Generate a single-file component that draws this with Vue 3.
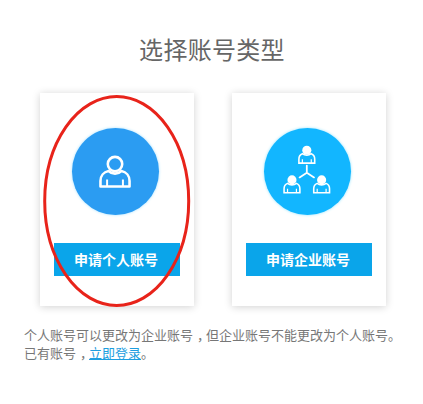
<script setup>
const cards = [
  { label: '申请个人账号', color: '#2b9cf2', glow: '#a5e0ff', kind: 'one' },
  { label: '申请企业账号', color: '#12b6ff', glow: '#8fe2ff', kind: 'many' }
]
const people = [
  { dx: 0, dy: 0 },
  { dx: -15, dy: 30 },
  { dx: 15, dy: 30 }
]
</script>

<template>
  <main class="page">
    <h1 class="title">选择账号类型</h1>
    <section class="cards">
      <article v-for="card in cards" :key="card.label" class="card">
        <div class="circle" :style="{ backgroundColor: card.color, boxShadow: '0 0 3px ' + card.glow }">
          <svg v-if="card.kind === 'one'" class="icon" viewBox="0 0 88 88" fill="none" stroke="#fff" stroke-width="2.6">
            <circle cx="43.500" cy="36.500" r="7.300" />
            <path d="M37 43.500C32 44.500 28.800 48.500 28.800 53.500V59.200H58.200V53.500C58.200 48.500 55 44.500 50 43.500C46.500 47 40.500 47 37 43.500Z" stroke-linejoin="round" />
            <path d="M35.500 52V59M51.500 52V59" stroke-width="2" />
          </svg>
          <svg v-else class="icon" viewBox="0 0 88 88" fill="none" stroke="#fff">
            <g v-for="p in people" :key="p.dx" :transform="'translate(' + (p.dx - 0.7) + ' ' + p.dy + ')'">
              <circle cx="44" cy="22.500" r="4.600" fill="#fff" stroke="none" />
              <path d="M39.500 26C37 27 36 29 36 31.500V35.500H52V31.500C52 29 51 27 48.500 26C46 28 42 28 39.500 26Z" stroke-width="1.600" />
              <path d="M39.500 31.500V35.500M48.500 31.500V35.500" stroke-width="1.200" />
            </g>
            <path d="M43.300 38V45.300L36 50M43.300 45.300L50.600 50" stroke-width="1.800" stroke-linecap="round" stroke-linejoin="round" />
          </svg>
        </div>
        <button class="apply" type="button">{{ card.label }}</button>
      </article>
      <svg class="ring" viewBox="0 0 150 215" fill="none">
        <ellipse cx="73.700" cy="107" rx="72" ry="104.500" stroke="#e8231a" stroke-width="3" />
      </svg>
    </section>
    <p class="note">
      个人账号可以更改为企业账号<span class="comma">，</span>但企业账号不能更改为个人账号。<br />已有账号<span class="comma">，</span><a class="link">立即登录</a>。
    </p>
  </main>
</template>

<style scoped>
.page {
  width: 423px;
  height: 404px;
  box-sizing: border-box;
  padding-top: 34px;
  background: #fff;
  font-family: "Noto Sans CJK SC", "Liberation Sans", sans-serif;
  overflow: hidden;
}
.title {
  margin: 0 0 24px;
  padding-left: 1px;
  height: 35px;
  line-height: 30px;
  text-align: center;
  font-size: 24px;
  letter-spacing: 0.3px;
  font-weight: 400;
  color: #666;
}
.cards {
  position: relative;
  display: flex;
  gap: 38px;
  padding-left: 40px;
}
.card {
  width: 154px;
  height: 213px;
  box-sizing: border-box;
  padding-top: 35px;
  display: flex;
  flex-direction: column;
  align-items: center;
  background: #fff;
  box-shadow: 0 1px 8px rgba(0, 0, 0, 0.18);
}
.circle {
  align-self: flex-start;
  margin-left: 31.500px;
  width: 87px;
  height: 87px;
  border-radius: 50%;
}
.icon {
  display: block;
  width: 87px;
  height: 87px;
}
.apply {
  margin-top: 28px;
  width: 126px;
  height: 33px;
  padding: 0 2px 0 0;
  border: 0;
  background: #0aa5ea;
  color: #fff;
  font-family: inherit;
  font-size: 14px;
  font-weight: 700;
  line-height: 33px;
}
.ring {
  position: absolute;
  left: 43px;
  top: 1px;
  width: 150px;
  height: 215px;
}
.note {
  margin: 20px 0 0 24px;
  font-size: 13px;
  line-height: 18px;
  color: #777;
  white-space: nowrap;
}
.comma {
  padding-left: 4px;
  letter-spacing: -4px;
}
.link {
  color: #1c9ee0;
  text-decoration: underline;
}
</style>
